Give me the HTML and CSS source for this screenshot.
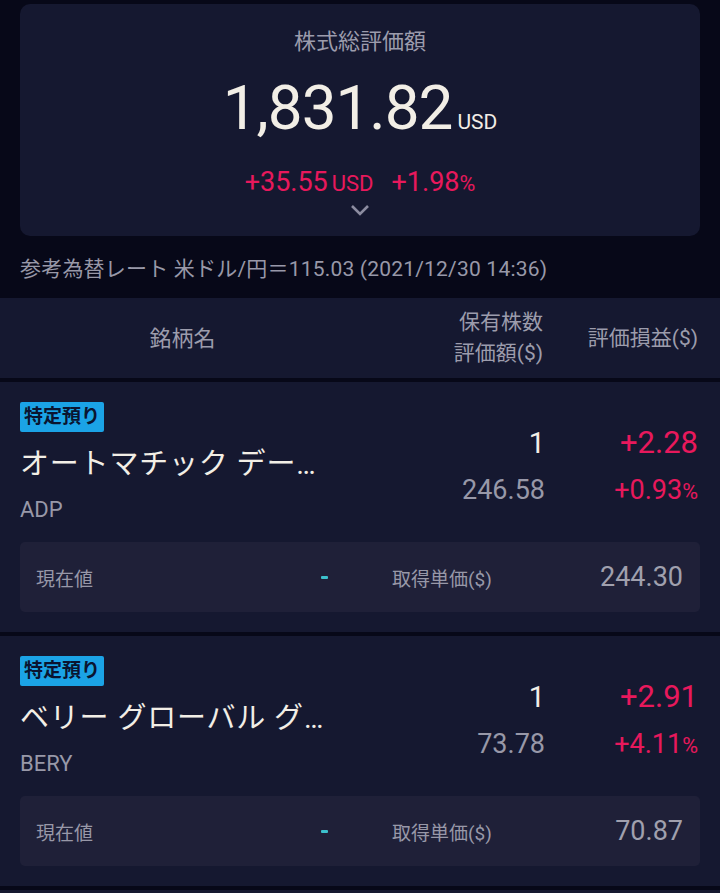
FILE: index.html
```html
<!DOCTYPE html>
<html lang="ja">
<head>
    <meta charset="UTF-8">
    <meta name="viewport" content="width=device-width, initial-scale=1.0">
    <title>株式総評価額</title>
    <link rel="stylesheet" href="styles.css">
</head>
<body>
    <div class="summary">
        <div class="summary-title">株式総評価額</div>
        <div class="total">1,831.82<span class="unit">USD</span></div>
        <div class="change">
            <span>+35.55<span class="small">USD</span></span>
            <span>+1.98<span class="pct">%</span></span>
        </div>
        <svg class="chevron" width="20" height="12" viewBox="0 0 20 12">
            <path d="M2 2 L10 10 L18 2" fill="none" stroke="#8c8ca0" stroke-width="2.6"/>
        </svg>
    </div>

    <div class="rate">参考為替レート 米ドル/円＝115.03 (2021/12/30 14:36)</div>

    <!-- Table header -->
    <div class="list-head">
        <div class="head-name">銘柄名</div>
        <div class="head-qty">保有株数<br>評価額($)</div>
        <div class="head-pl">評価損益($)</div>
    </div>

    <div class="stock">
        <div class="stock-top">
            <div class="stock-info">
                <span class="badge">特定預り</span>
                <div class="stock-name">オートマチック デー…</div>
                <div class="ticker">ADP</div>
            </div>
            <div class="col-qty">
                <div class="qty">1</div>
                <div class="value">246.58</div>
            </div>
            <div class="col-pl">
                <div class="pl">+2.28</div>
                <div class="pl-pct">+0.93<span class="pct">%</span></div>
            </div>
        </div>
        <div class="stock-sub">
            <div class="sub-half left">
                <span class="sub-label">現在値</span>
                <span class="dash"></span>
            </div>
            <div class="sub-half right">
                <span class="sub-label">取得単価($)</span>
                <span class="sub-value">244.30</span>
            </div>
        </div>
    </div>

    <div class="stock">
        <div class="stock-top">
            <div class="stock-info">
                <span class="badge">特定預り</span>
                <div class="stock-name">ベリー グローバル グ…</div>
                <div class="ticker">BERY</div>
            </div>
            <div class="col-qty">
                <div class="qty">1</div>
                <div class="value">73.78</div>
            </div>
            <div class="col-pl">
                <div class="pl">+2.91</div>
                <div class="pl-pct">+4.11<span class="pct">%</span></div>
            </div>
        </div>
        <div class="stock-sub">
            <div class="sub-half left">
                <span class="sub-label">現在値</span>
                <span class="dash"></span>
            </div>
            <div class="sub-half right">
                <span class="sub-label">取得単価($)</span>
                <span class="sub-value">70.87</span>
            </div>
        </div>
    </div>

    <div class="stock"></div>
</body>
</html>
```

FILE: styles.css
```css
body {
    margin: 0;
    padding: 4px 0 0;
    font-family: Roboto, "Noto Sans CJK JP", sans-serif;
    background: #070818;
    color: #f2eee6;
    overflow: hidden;
}

/* Summary card */
.summary {
    margin: 0 20px;
    height: 232px;
    box-sizing: border-box;
    background: #151830;
    border-radius: 10px;
    padding-top: 24px;
    display: flex;
    flex-direction: column;
    align-items: center;
}

.summary-title {
    font-size: 22px;
    color: #9c9cac;
    line-height: 28px;
}

.total {
    margin-top: 16px;
    font-size: 62px;
    line-height: 72px;
    letter-spacing: -1px;
}

.total .unit {
    font-size: 21px;
    margin-left: 5px;
    letter-spacing: 0;
}

.change {
    margin-top: 8px;
    display: flex;
    gap: 18px;
    color: #e8185c;
    font-size: 27px;
    line-height: 32px;
}

.change .small {
    font-size: 22px;
    margin-left: 4px;
}

.pct {
    font-size: 0.8em;
}

.chevron {
    margin-top: 4px;
}

.rate {
    padding: 20px 20px 0;
    height: 62px;
    box-sizing: border-box;
    font-size: 21px;
    line-height: 26px;
    letter-spacing: 0.2px;
    color: #9898a8;
}

/* List header */
.list-head {
    display: grid;
    grid-template-columns: 1fr 160px 155px;
    align-items: center;
    height: 80px;
    padding: 0 22px 0 20px;
    background: #151830;
    color: #9c9cac;
    font-size: 21px;
    line-height: 31px;
    margin-bottom: 4px;
}

.head-name {
    text-align: center;
    padding-right: 38px;
    font-size: 22px;
}

.head-qty,
.head-pl {
    text-align: right;
}

/* Stock rows */
.stock {
    background: #151830;
    padding: 20px 20px;
    height: 250px;
    box-sizing: border-box;
    margin-bottom: 4px;
}

.stock-top {
    display: grid;
    grid-template-columns: 1fr 160px 155px;
    height: 120px;
}

.badge {
    display: inline-block;
    background: #1ba3e6;
    color: #0a1430;
    font-weight: bold;
    font-size: 19px;
    line-height: 30px;
    padding: 0 4px;
    border-radius: 2px;
}

.stock-name {
    margin-top: 14px;
    font-size: 29px;
    line-height: 36px;
    letter-spacing: 0.8px;
    white-space: nowrap;
}

.ticker {
    margin-top: 15px;
    font-size: 22px;
    line-height: 26px;
    color: #9898a8;
}

.col-qty,
.col-pl {
    text-align: right;
    padding-top: 24px;
}

.col-pl {
    padding-right: 2px;
}

.qty {
    font-size: 29px;
    line-height: 34px;
}

.pl {
    font-size: 31px;
    line-height: 34px;
    color: #e8185c;
}

.value {
    margin-top: 14px;
    font-size: 27px;
    line-height: 32px;
    color: #9898a8;
}

.pl-pct {
    margin-top: 14px;
    font-size: 27px;
    line-height: 32px;
    color: #e8185c;
}

.stock-sub {
    margin-top: 20px;
    height: 70px;
    background: #1f2038;
    border-radius: 5px;
    display: grid;
    grid-template-columns: 1fr 1fr;
    align-items: center;
}

.sub-half {
    display: flex;
    justify-content: space-between;
    align-items: center;
}

.sub-half.left {
    padding: 0 32px 0 16px;
}

.sub-half.right {
    padding: 0 17px 0 32px;
}

.sub-label {
    font-size: 19px;
    color: #9898a8;
}

.dash {
    width: 7px;
    height: 3px;
    border-radius: 1px;
    background: #3cc0cc;
}

.sub-value {
    font-size: 27px;
    color: #a0a0ae;
}
```
